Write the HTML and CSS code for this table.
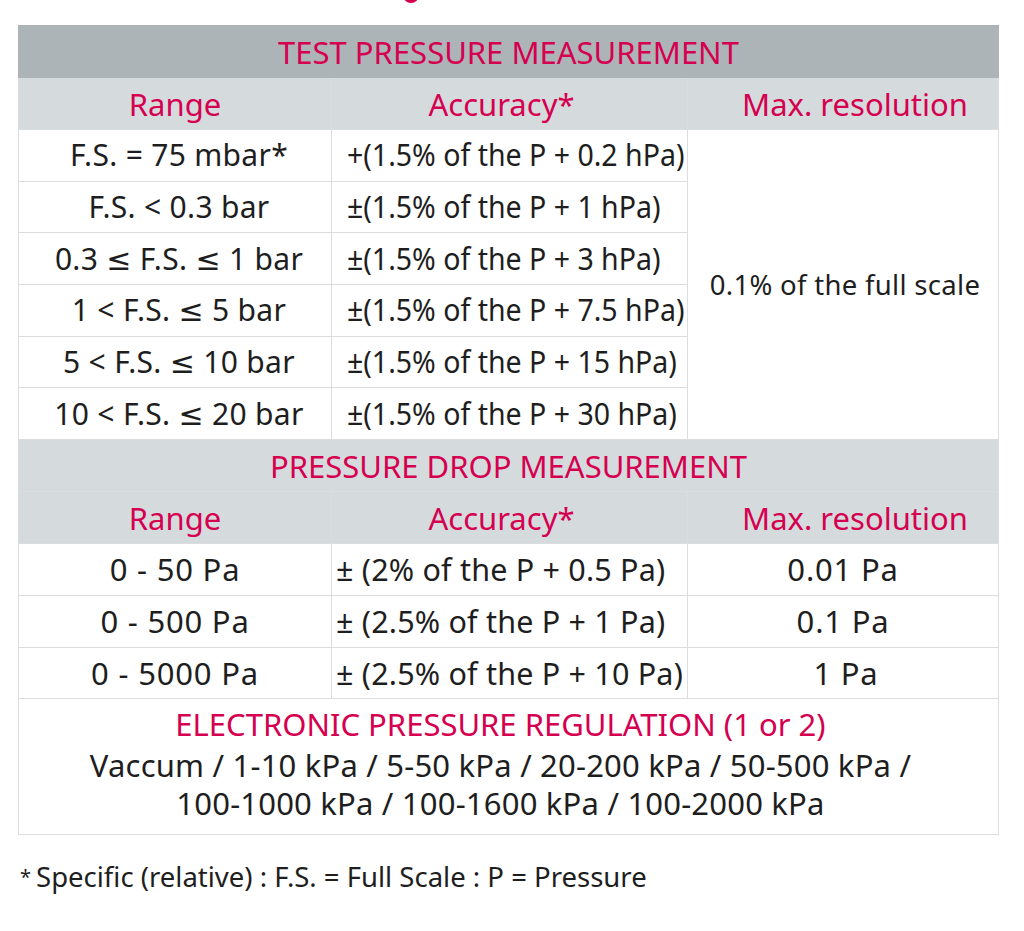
FILE: index.html
```html
<!DOCTYPE html>
<html>
<head>
<meta charset="utf-8">
<link rel="stylesheet" href="styles.css">
</head>
<body>
<div class="page">
  <div class="title-tail"></div>
  <table class="spec">
    <colgroup>
      <col class="c1"><col class="c2"><col class="c3">
    </colgroup>
    <tr class="section dark"><td colspan="3">TEST PRESSURE MEASUREMENT</td></tr>
    <tr class="head"><td>Range</td><td class="h-acc">Accuracy*</td><td class="h-res">Max. resolution</td></tr>
    <tr class="row"><td class="wide">F.S. = 75 mbar*</td><td class="acc"><span class="cond">+(1.5% of the P + 0.2 hPa)</span></td><td class="res" rowspan="6">0.1% of the full scale</td></tr>
    <tr class="row"><td class="wide">F.S. &lt; 0.3 bar</td><td class="acc"><span class="cond">±(1.5% of the P + 1 hPa)</span></td></tr>
    <tr class="row"><td class="wide">0.3 ≤ F.S. ≤ 1 bar</td><td class="acc"><span class="cond">±(1.5% of the P + 3 hPa)</span></td></tr>
    <tr class="row"><td class="wide">1 &lt; F.S. ≤ 5 bar</td><td class="acc"><span class="cond">±(1.5% of the P + 7.5 hPa)</span></td></tr>
    <tr class="row"><td class="wide">5 &lt; F.S. ≤ 10 bar</td><td class="acc"><span class="cond">±(1.5% of the P + 15 hPa)</span></td></tr>
    <tr class="row"><td class="wide">10 &lt; F.S. ≤ 20 bar</td><td class="acc"><span class="cond">±(1.5% of the P + 30 hPa)</span></td></tr>
    <tr class="section light"><td colspan="3">PRESSURE DROP MEASUREMENT</td></tr>
    <tr class="head"><td>Range</td><td class="h-acc">Accuracy*</td><td class="h-res">Max. resolution</td></tr>
    <tr class="row drop"><td>0 - 50 Pa</td><td class="acc2">± (2% of the P + 0.5 Pa)</td><td>0.01 Pa</td></tr>
    <tr class="row drop"><td>0 - 500 Pa</td><td class="acc2">± (2.5% of the P + 1 Pa)</td><td>0.1 Pa</td></tr>
    <tr class="row drop"><td>0 - 5000 Pa</td><td class="acc2">± (2.5% of the P + 10 Pa)</td><td class="one">1 Pa</td></tr>
    <tr class="reg"><td colspan="3">
      <div class="reg-title">ELECTRONIC PRESSURE REGULATION (1 or 2)</div>
      <div class="reg-line">Vaccum / 1-10 kPa / 5-50 kPa / 20-200 kPa / 50-500 kPa /</div>
      <div class="reg-line">100-1000 kPa / 100-1600 kPa / 100-2000 kPa</div>
    </td></tr>
  </table>
  <p class="note"><span class="star">*</span>Specific (relative) : F.S. = Full Scale : P = Pressure</p>
</div>
</body>
</html>
```

FILE: styles.css
```css
html, body {
  margin: 0;
  padding: 0;
  background: #ffffff;
}
body {
  font-family: "Noto Sans", "DejaVu Sans", sans-serif;
  color: #1e1e1e;
}
.page {
  position: relative;
  padding: 25px 0 0 18px;
  width: 980px;
}
.title-tail {
  position: absolute;
  left: 403px;
  top: -6px;
  width: 16px;
  height: 9px;
  border-radius: 0 0 8px 8px;
  background: #d6004f;
}
.spec {
  border-collapse: collapse;
  table-layout: fixed;
  width: 980px;
}
.c1 { width: 313px; }
.c2 { width: 356px; }
.c3 { width: 311px; }
.spec td {
  border: 1px solid #dadee1;
  padding: 0;
  text-align: center;
  vertical-align: middle;
  white-space: nowrap;
  font-size: 30px;
  line-height: 34px;
}
.cond {
  display: inline-block;
  transform: scaleX(0.95);
  transform-origin: left center;
}
.section td, .head td {
  color: #d5004f;
  font-size: 31px;
}
.section td { height: 51px; }
.head td { height: 51px; }
.h-acc { padding-right: 16px !important; }
.h-res { padding-left: 24px !important; }
.section.dark td {
  background: #adb4b8;
  border-color: #adb4b8;
}
.section.light td { background: #d5dadd; }
.head td { background: #d5dadd; }
.row td { height: 50.7px; }
.wide {
  letter-spacing: 0.3px;
  padding-left: 8px !important;
}
.acc {
  text-align: left !important;
  padding-left: 15px !important;
}
.acc2 {
  text-align: left !important;
  padding-left: 4px !important;
}
.drop td {
  font-size: 31px;
  letter-spacing: 0.8px;
}
.drop .acc2 {
  font-size: 30.5px;
  letter-spacing: 0.2px;
}
.one { padding-left: 6px !important; }
.res {
  font-size: 27.5px !important;
  letter-spacing: 0.3px;
  padding-left: 4px !important;
}
.reg td {
  padding: 3px 16px 12px 0 !important;
}
.reg-title {
  color: #d5004f;
  font-size: 31px;
  line-height: 44px;
}
.reg-line {
  font-size: 31px;
  line-height: 38px;
  letter-spacing: 0.2px;
}
.note {
  margin: 25px 0 0 2px;
  font-size: 27.5px;
  line-height: 34px;
}
.star {
  font-size: 20px;
  vertical-align: 3px;
  margin-right: 5px;
}
```
